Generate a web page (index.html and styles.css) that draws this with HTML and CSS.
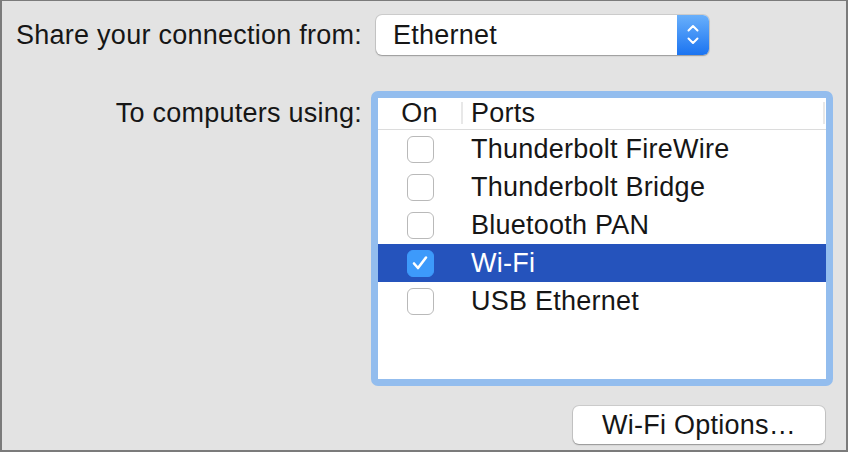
FILE: index.html
```html
<!DOCTYPE html>
<html>
<head lang="en">
    <meta charset="UTF-8">
    <title>Internet Sharing</title>
    <link rel="stylesheet" href="styles.css">
</head>
<body>
<div id="window">
    <div class="label label-share">Share your connection from:</div>
    <div class="popup">
        <span class="popup-value">Ethernet</span>
        <span class="popup-arrows">
            <svg width="12" height="24" viewBox="0 0 12 24">
                <path d="M1.5 7.5 L6 3 L10.5 7.5" fill="none" stroke="#fff" stroke-width="2" stroke-linecap="round" stroke-linejoin="round"/>
                <path d="M1.5 15.5 L6 20 L10.5 15.5" fill="none" stroke="#fff" stroke-width="2" stroke-linecap="round" stroke-linejoin="round"/>
            </svg>
        </span>
    </div>

    <div class="label label-to">To computers using:</div>
    <div id="ports">
        <div class="head">
            <div class="col-on">On</div>
            <div class="col-name">Ports</div>
        </div>
        <div class="row">
            <div class="col-on"><span class="check"></span></div>
            <div class="col-name">Thunderbolt FireWire</div>
        </div>
        <div class="row">
            <div class="col-on"><span class="check"></span></div>
            <div class="col-name">Thunderbolt Bridge</div>
        </div>
        <div class="row">
            <div class="col-on"><span class="check"></span></div>
            <div class="col-name">Bluetooth PAN</div>
        </div>
        <div class="row selected">
            <div class="col-on">
                <span class="check checked">
                    <svg width="26" height="26" viewBox="0 0 26 26">
                        <path d="M7 13.5 L11 18 L19 7.5" fill="none" stroke="#fff" stroke-width="2.6" stroke-linecap="round" stroke-linejoin="round"/>
                    </svg>
                </span>
            </div>
            <div class="col-name">Wi-Fi</div>
        </div>
        <div class="row">
            <div class="col-on"><span class="check"></span></div>
            <div class="col-name">USB Ethernet</div>
        </div>
    </div>

    <div class="button">Wi-Fi Options…</div>
</div>
</body>
</html>
```

FILE: styles.css
```css
*{
    margin: 0;
    padding: 0;
    box-sizing: border-box;
}
body{
    font-family: "Liberation Sans", Arial, sans-serif;
    font-size: 27px;
    letter-spacing: 0.25px;
    color: #161616;
}
#window{
    width: 848px;
    height: 452px;
    background: #e3e3e3;
    border: 2px solid #7b7b7b;
    border-top-width: 1px;
    padding: 14px 0 0 14px;
    display: grid;
    grid-template-columns: 346px 462px;
    grid-template-rows: auto auto auto;
    align-items: start;
    column-gap: 9px;
}
.label{
    grid-column: 1;
    text-align: right;
    white-space: nowrap;
}
.label-share{
    grid-row: 1;
    line-height: 40px;
}
.label-to{
    grid-row: 2;
    margin-top: 36px;
    line-height: 32px;
}
.popup{
    grid-column: 2;
    grid-row: 1;
    margin-left: 5px;
    width: 333px;
    height: 40px;
    background: #fff;
    border-radius: 6px;
    box-shadow: 0 0 0 1px rgba(0,0,0,0.10), 0 1px 1.5px rgba(0,0,0,0.25);
    display: flex;
    align-items: center;
    justify-content: space-between;
}
.popup-value{
    padding-left: 17px;
}
.popup-arrows{
    width: 32px;
    height: 40px;
    border-radius: 0 6px 6px 0;
    background: linear-gradient(#69b0fb, #1b74f1);
    display: flex;
    align-items: center;
    justify-content: center;
}
.popup-arrows svg{
    display: block;
}
#ports{
    grid-column: 2;
    grid-row: 2;
    margin-top: 30px;
    height: 295px;
    border: 7px solid #93bdee;
    border-radius: 7px;
    background: #fff;
    white-space: nowrap;
}
.head{
    display: flex;
    height: 32px;
    border-bottom: 1px solid #dcdcdc;
}
.head .col-on,
.head .col-name{
    height: 22px;
    line-height: 22px;
    margin-top: 4px;
    border-right: 2px solid #e8e8e8;
}
.head .col-name{
    flex: 1;
    margin-right: 1px;
}
.col-on{
    width: 85px;
    display: flex;
    justify-content: center;
    align-items: center;
    flex-shrink: 0;
}
.col-name{
    padding-left: 8px;
}
.row{
    display: flex;
    height: 38px;
    align-items: center;
}
.row.selected{
    background: #2553bc;
    color: #fff;
}
.check{
    display: block;
    width: 27px;
    height: 27px;
    border: 1px solid #b9b9b9;
    border-radius: 6px;
    background: #fff;
}
.check.checked{
    background: #3d9afb;
    border-color: #3d9afb;
}
.check svg{
    display: block;
    margin: -1px;
}
.button{
    grid-column: 2;
    grid-row: 3;
    justify-self: end;
    margin: 13px 8px 0 0;
    width: 252px;
    height: 38px;
    background: #fff;
    border-radius: 6px;
    box-shadow: 0 0 0 1px rgba(0,0,0,0.10), 0 1px 1.5px rgba(0,0,0,0.28);
    text-align: center;
    line-height: 38px;
}
```
